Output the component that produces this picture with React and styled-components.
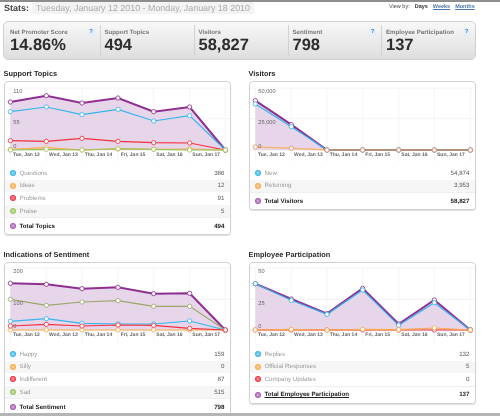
import React from 'react';
import styled, { createGlobalStyle } from 'styled-components';

const Global = createGlobalStyle`
  html, body { margin: 0; padding: 0; background: #fff; }
  body { font-family: "Liberation Sans", Arial, sans-serif; width: 500px; height: 416px; overflow: hidden; text-rendering: geometricPrecision; }
`;

const Page = styled.div`
  position: relative;
  width: 500px;
  height: 416px;
  overflow: hidden;
  border-top: 2px solid #8d8d8d;
  box-sizing: border-box;
  filter: blur(0.35px);
`;
const BottomBar = styled.div`
  position: absolute;
  left: 0; right: 0; bottom: 0;
  height: 3px;
  background: #b5b5b5;
`;
const Header = styled.div`
  display: flex;
  align-items: center;
  height: 12px;
  padding-left: 4px;
`;
const StatsLabel = styled.div`
  font-size: 9px;
  font-weight: bold;
  color: #444;
  width: 28px;
`;
const DateRange = styled.div`
  width: 222px;
  height: 12px;
  line-height: 12px;
  background: #f3f3f3;
  border-radius: 0 0 2px 2px;
  color: #a9a9a9;
  font-size: 8.9px;
  padding-left: 4px;
  box-sizing: border-box;
  white-space: nowrap;
`;
const ViewBy = styled.div`
  margin-left: 135px;
  display: flex;
  gap: 5px;
  font-size: 5.5px;
  color: #444;
  margin-top: -2px;
  white-space: nowrap;
`;
const ViewOption = styled.span`
  font-weight: bold;
  color: ${p => (p.$active ? '#333' : '#4a76a8')};
  text-decoration: ${p => (p.$active ? 'none' : 'underline')};
`;
const StatsPanel = styled.div`
  display: grid;
  grid-template-columns: 95.5px 94px 94px 93.5px 1fr;
  margin: 7px 0 0 3px;
  width: 473px;
  height: 39px;
  box-sizing: border-box;
  border: 1px solid #cfcfcf;
  border-radius: 5px;
  background: linear-gradient(#f8f8f8, #dedede);
  padding: 3px 0;
`;
const StatCell = styled.div`
  padding: 3px 5px 0 ${p => (p.$first ? '6px' : '4px')};
  border-left: ${p => (p.$first ? 'none' : '1px solid #d2d2d2')};
  min-width: 0;
`;
const StatTop = styled.div`
  display: flex;
  justify-content: space-between;
  align-items: center;
  height: 8px;
`;
const StatName = styled.div`
  font-size: 6.15px;
  font-weight: bold;
  color: #777;
  white-space: nowrap;
`;
const Help = styled.span`
  width: 7px;
  height: 7px;
  background: #e3effa;
  color: #3b7cc4;
  font-size: 6px;
  font-weight: bold;
  line-height: 7px;
  text-align: center;
`;
const StatValue = styled.div`
  font-size: 16.5px;
  font-weight: bold;
  color: #2d2d2d;
  line-height: 17px;
  margin-top: 1px;
`;
const Grid = styled.div`
  display: grid;
  grid-template-columns: 227px 227px;
  grid-template-rows: 181px auto;
  column-gap: 18px;
  margin: 9px 0 0 3.5px;
`;
const Section = styled.section`
  min-width: 0;
`;
const Title = styled.h2`
  margin: 0 0 2px;
  font-size: 7.4px;
  line-height: 10px;
  font-weight: bold;
  color: #2b2b2b;
`;
const Card = styled.div`
  border: 1px solid #d2d2d2;
  border-radius: 4px;
  box-shadow: 0 1px 1px #ddd;
  background: #fff;
  overflow: hidden;
`;
const ChartSvg = styled.svg`
  display: block;
  width: 100%;
  height: 85px;
`;
const Row = styled.div`
  display: flex;
  align-items: center;
  height: ${p => (p.$total ? '17px' : '12.6px')};
  padding: 0 5px 0 5.5px;
  background: ${p => (p.$shade ? '#f6f6f6' : '#fff')};
  border-top: ${p => (p.$total ? '1px solid #efefef' : 'none')};
  box-sizing: border-box;
  font-size: 6.2px;
`;
const Dot = styled.span`
  width: 6px;
  height: 6px;
  border-radius: 50%;
  background: radial-gradient(circle, ${p => p.$color}99 25%, ${p => p.$color} 60%);
  margin-right: 3.5px;
  flex: none;
`;
const Name = styled.span`
  flex: 1;
  color: ${p => (p.$total ? '#222' : '#999')};
  font-weight: ${p => (p.$total ? 'bold' : 'normal')};
  text-decoration: ${p => (p.$link ? 'underline' : 'none')};
`;
const Value = styled.span`
  color: ${p => (p.$total ? '#222' : '#555')};
  font-weight: ${p => (p.$total ? 'bold' : 'normal')};
`;

const C = { blue: '#35b5ea', orange: '#fbab4a', red: '#f5303f', green: '#97c65f', purple: '#8e2f91', total: '#a45bb0' };
const days = ['Tue, Jan 12', 'Wed, Jan 13', 'Thu, Jan 14', 'Fri, Jan 15', 'Sat, Jan 16', 'Sun, Jan 17'];

function Chart({ xs, grid, top, ylabels, series, ylabelX, lineOpacity }) {
  const vx = xs[0] - 16;
  const bottom = grid[2] + 36;
  const purple = series[0];
  const area = `M${xs[0]},${grid[2]} ` + purple.ys.map((y, i) => `L${xs[i]},${y}`).join(' ') + ` L${xs[6]},${grid[2]} Z`;
  return (
    <ChartSvg viewBox={`${vx} ${top} 675 255`} preserveAspectRatio="none">
      {grid.map(y => <line key={y} x1={vx} x2={vx + 675} y1={y} y2={y} stroke={y === grid[2] ? '#ddd' : '#ededed'} strokeWidth="2" />)}
      {xs.map(x => <line key={x} x1={x} x2={x} y1={grid[0]} y2={bottom} stroke="#f0f0f0" strokeWidth="2" />)}
      <path d={area} fill="#e7d6e9" />
      {series.map(s => (
        <polyline key={s.color} points={s.ys.map((y, i) => `${xs[i]},${y}`).join(' ')} fill="none" stroke={s.color} strokeWidth={s.width} strokeOpacity={lineOpacity && s.color === C.orange ? 0.72 : 1} />
      ))}
      {series.map(s => s.ys.map((y, i) => (
        <circle key={s.color + i} cx={xs[i]} cy={y} r="6.5" fill="#fff" stroke={s.dot || s.color} strokeWidth="2.5" />
      )))}
      {ylabels.map((l, i) => (
        <text key={l} x={ylabelX} y={grid[i] + (i === 2 ? -6 : 16)} fontSize="17" fill="#666" fontFamily="Liberation Sans, sans-serif">{l}</text>
      ))}
      {days.map((d, i) => (
        <text key={d} x={xs[i] + 8} y={grid[2] + 19} fontSize="15" fontWeight="bold" fill="#666" fontFamily="Liberation Sans, sans-serif">{d}</text>
      ))}
    </ChartSvg>
  );
}

const xsL = [27, 135, 242, 350, 457, 565, 672];
const xsR = [45, 153, 260, 367, 475, 582, 690];

const stats = [
  { name: 'Net Promoter Score', value: '14.86%', help: true },
  { name: 'Support Topics', value: '494' },
  { name: 'Visitors', value: '58,827' },
  { name: 'Sentiment', value: '798', help: true },
  { name: 'Employee Participation', value: '137', help: true },
];

function Legend({ rows, total, link }) {
  return (
    <>
      {rows.map((r, i) => (
        <Row key={r[0]} $shade={i % 2 === 1}>
          <Dot $color={r[2]} />
          <Name>{r[0]}</Name>
          <Value>{r[1]}</Value>
        </Row>
      ))}
      <Row $total>
        <Dot $color={C.total} />
        <Name $total $link={link}>{total[0]}</Name>
        <Value $total>{total[1]}</Value>
      </Row>
    </>
  );
}

export default function App() {
  return (
    <Page>
      <Global />
      <Header>
        <StatsLabel>Stats:</StatsLabel>
        <DateRange>Tuesday, January 12 2010 - Monday, January 18 2010</DateRange>
        <ViewBy>
          <span>View by:</span>
          <ViewOption $active>Days</ViewOption>
          <ViewOption>Weeks</ViewOption>
          <ViewOption>Months</ViewOption>
        </ViewBy>
      </Header>
      <StatsPanel>
        {stats.map((s, i) => (
          <StatCell key={s.name} $first={i === 0}>
            <StatTop>
              <StatName>{s.name}</StatName>
              {s.help && <Help>?</Help>}
            </StatTop>
            <StatValue>{s.value}</StatValue>
          </StatCell>
        ))}
      </StatsPanel>
      <Grid>
        <Section>
          <Title>Support Topics</Title>
          <Card>
            <Chart xs={xsL} grid={[68, 160, 254]} top={50} ylabelX={36} ylabels={['110', '55', '0']} series={[
              { color: C.purple, width: 6, ys: [110, 91, 113, 98, 139, 125, 254] },
              { color: C.blue, width: 3.5, ys: [139, 125, 148, 132, 167, 151, 254] },
              { color: C.red, width: 3.5, ys: [226, 228, 219, 228, 232, 233, 254] },
              { color: C.orange, width: 3.5, ys: [252, 247, 254, 251, 252, 251, 254] },
              { color: C.green, width: 3.5, ys: [254, 252, 254, 250, 252, 254, 254] },
            ]} />
            <Legend rows={[['Questions', '386', C.blue], ['Ideas', '12', C.orange], ['Problems', '91', C.red], ['Praise', '5', C.green]]} total={['Total Topics', '494']} />
          </Card>
        </Section>
        <Section>
          <Title>Visitors</Title>
          <Card>
            <Chart xs={xsR} grid={[68, 160, 254]} top={50} ylabelX={54} ylabels={['50,000', '25,000', '0']} lineOpacity series={[
              { color: C.purple, width: 6, ys: [106, 178, 254, 254, 254, 254, 254] },
              { color: C.blue, width: 3.5, ys: [116, 184, 254, 254, 254, 254, 254] },
              { color: C.orange, width: 4.5, ys: [245, 249, 254, 254, 254, 254, 254], dot: '#e8895a' },
            ]} />
            <Legend rows={[['New', '54,874', C.blue], ['Returning', '3,953', C.orange]]} total={['Total Visitors', '58,827']} />
          </Card>
        </Section>
        <Section>
          <Title>Indications of Sentiment</Title>
          <Card>
            <Chart xs={xsL} grid={[87, 181, 273]} top={72} ylabelX={36} ylabels={['200', '100', '0']} series={[
              { color: C.purple, width: 6, ys: [133, 136, 149, 145, 164, 163, 273] },
              { color: '#9aa86a', width: 3.5, ys: [181, 199, 189, 185, 202, 202, 273] },
              { color: C.blue, width: 3.5, ys: [247, 239, 253, 255, 255, 246, 273] },
              { color: C.orange, width: 3.5, ys: [273, 273, 273, 273, 273, 273, 273] },
              { color: C.red, width: 3.5, ys: [261, 256, 261, 258, 259, 268, 273] },
            ]} />
            <Legend rows={[['Happy', '159', C.blue], ['Silly', '0', C.orange], ['Indifferent', '87', C.red], ['Sad', '515', C.green]]} total={['Total Sentiment', '798']} />
          </Card>
        </Section>
        <Section>
          <Title>Employee Participation</Title>
          <Card>
            <Chart xs={xsR} grid={[87, 181, 273]} top={72} ylabelX={54} ylabels={['50', '25', '0']} series={[
              { color: C.purple, width: 6, ys: [134, 180, 224, 148, 255, 183, 273] },
              { color: C.blue, width: 3.5, ys: [134, 184, 226, 153, 259, 191, 273] },
              { color: C.red, width: 3.5, ys: [273, 273, 273, 273, 273, 273, 273] },
              { color: C.orange, width: 3.5, ys: [273, 271, 273, 271, 272, 267, 273] },
            ]} />
            <Legend rows={[['Replies', '132', C.blue], ['Official Responses', '5', C.orange], ['Company Updates', '0', C.red]]} total={['Total Employee Participation', '137']} link />
          </Card>
        </Section>
      </Grid>
      <BottomBar />
    </Page>
  );
}
